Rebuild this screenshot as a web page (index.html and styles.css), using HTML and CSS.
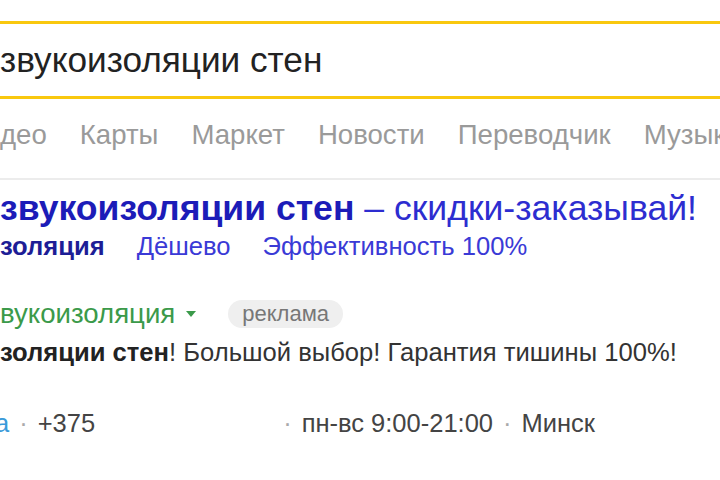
FILE: index.html
```html
<!DOCTYPE html>
<html lang="ru">
<head>
<meta charset="utf-8">
<title>Яндекс</title>
<link rel="stylesheet" href="styles.css">
</head>
<body>
<div class="search"><span class="query">звукоизоляции стен</span></div>
<nav class="tabs">
  <span class="tab tab-cut">део</span>
  <span class="tab">Карты</span>
  <span class="tab">Маркет</span>
  <span class="tab">Новости</span>
  <span class="tab">Переводчик</span>
  <span class="tab">Музык</span>
</nav>
<div class="ad">
  <div class="title"><b>звукоизоляции стен</b> – скидки-заказывай!</div>
  <div class="sitelinks">
    <span class="sl sl-bold">золяция</span>
    <span class="sl">Дёшево</span>
    <span class="sl">Эффективность 100%</span>
  </div>
  <div class="path">
    <span class="domain">вукоизоляция</span>
    <svg class="arrow" width="12" height="8" viewBox="0 0 12 8"><path d="M1 1h10L6 7z" fill="#3b9a4a"/></svg>
    <span class="badge">реклама</span>
  </div>
  <div class="desc"><b>золяции стен</b>! Большой выбор! Гарантия тишины 100%!</div>
  <div class="meta">
    <span class="meta-link">а</span>
    <span class="dot">·</span>
    <span class="phone">+375</span>
    <span class="dot">·</span>
    <span>пн-вс 9:00-21:00</span>
    <span class="dot">·</span>
    <span>Минск</span>
  </div>
</div>
</body>
</html>
```
FILE: styles.css
```css
html, body {
  margin: 0;
  padding: 0;
  background: #fff;
}
body {
  width: 720px;
  height: 480px;
  overflow: hidden;
  font-family: "Liberation Sans", Arial, sans-serif;
  color: #333;
}
.search {
  margin-top: 21px;
  height: 72px;
  border-top: 3px solid #f9c80e;
  border-bottom: 3px solid #f9c80e;
  display: flex;
  align-items: center;
}
.query {
  font-size: 35.2px;
  color: #222;
  white-space: nowrap;
}
.tabs {
  display: flex;
  gap: 33px;
  padding: 21px 0 28px;
  border-bottom: 2px solid #ececec;
  white-space: nowrap;
}
.tab {
  font-size: 27.6px;
  line-height: 30px;
  color: #9a9a9a;
}
.ad {
  white-space: nowrap;
}
.title {
  margin-top: 8px;
  font-size: 35.6px;
  line-height: 40px;
  color: #2d2dd0;
}
.title b {
  color: #1c1cb8;
}
.sitelinks {
  margin-top: 3px;
  display: flex;
  gap: 32px;
  font-size: 25.6px;
  line-height: 30px;
}
.sl {
  color: #3a3ad6;
}
.sl-bold {
  color: #1d1d96;
  font-weight: bold;
}
.path {
  margin-top: 38px;
  display: flex;
  align-items: center;
  height: 30px;
  font-size: 27.6px;
}
.domain {
  color: #3b9a4a;
}
.arrow {
  margin-left: 10px;
}
.badge {
  margin-left: 31px;
  background: #efefef;
  border-radius: 14px;
  height: 28px;
  line-height: 28px;
  padding: 0 14px;
  font-size: 22px;
  color: #777;
}
.desc {
  margin-top: 8px;
  font-size: 25.6px;
  line-height: 30px;
  color: #333;
}
.desc b {
  color: #222;
}
.meta {
  margin-top: 41px;
  display: flex;
  align-items: center;
  gap: 10px;
  font-size: 25.5px;
  line-height: 30px;
  color: #444;
}
.meta-link {
  color: #3a9ad9;
  margin-left: -5px;
}
.dot {
  color: #aaa;
}
.phone {
  margin-right: 178px;
}
```
